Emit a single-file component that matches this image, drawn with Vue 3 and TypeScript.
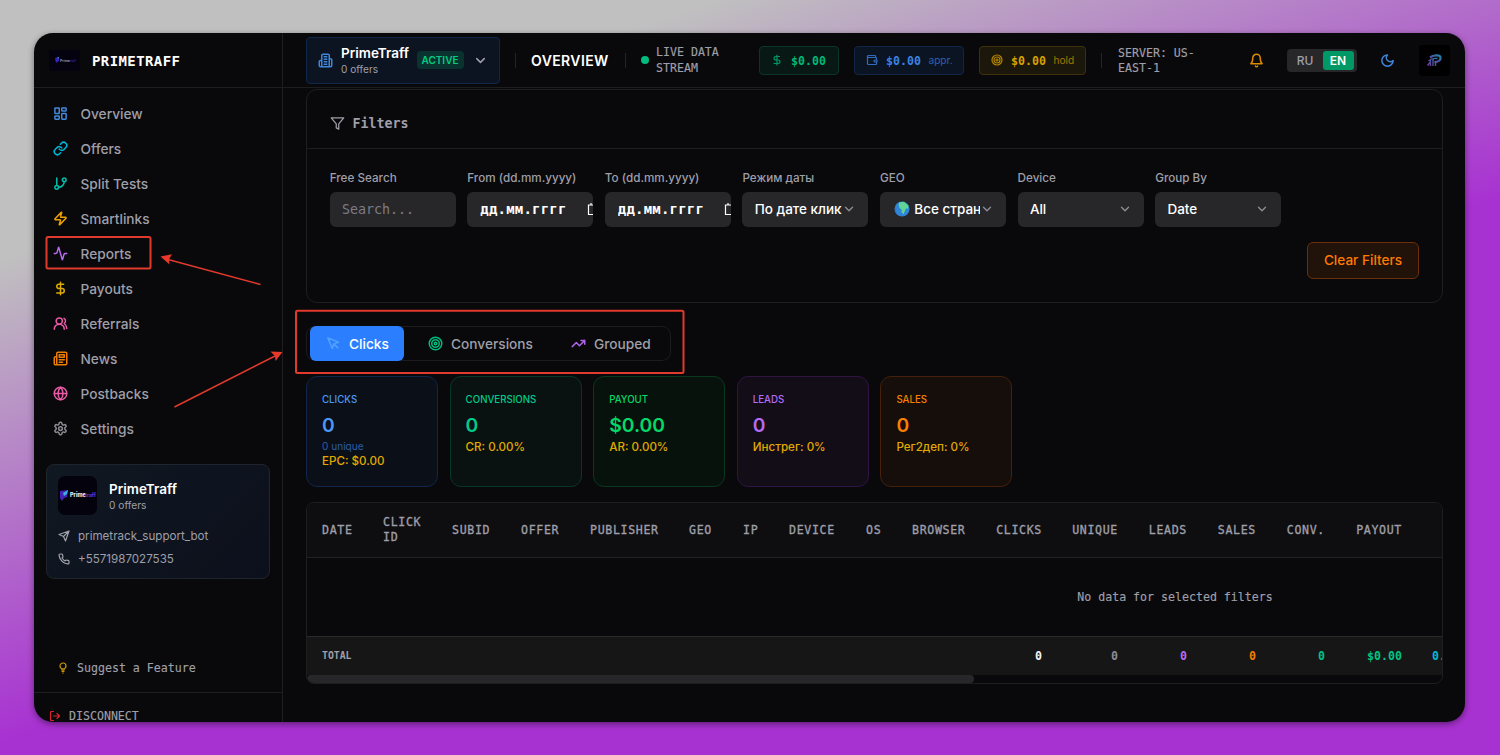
<template>
  <div class="backdrop">
    <div class="window">
      <!-- Sidebar -->
      <aside class="sidebar">
        <div class="brand">
          <svg class="brand-logo" viewBox="0 0 31 21">
            <rect width="31" height="21" rx="1" fill="#05020f" />
            <path d="M6 8l4-1v4l-3 2z" fill="#3d20b8" />
            <path d="M8 7.500l2-.5v2z" fill="#2f8bc4" />
            <text x="11" y="11.500" font-size="3.500" font-weight="700" fill="#8d8a9c">Prime</text>
            <text x="20.500" y="11.500" font-size="3" font-weight="700" fill="#37208a">traff</text>
          </svg>
          <span class="brand-name">PRIMETRAFF</span>
        </div>

        <nav class="nav">
          <a v-for="item in navItems" :key="item.label" class="nav-item">
            <svg
              class="icon nav-icon"
              :class="item.tone"
              viewBox="0 0 24 24"
              v-html="icons[item.icon]"
            ></svg>
            <span class="nav-label">{{ item.label }}</span>
          </a>
        </nav>

        <div class="company">
          <div class="company-head">
            <svg class="company-logo" viewBox="0 0 39 39">
              <rect width="39" height="39" rx="7" fill="#04020d" />
              <path d="M2 15l8-1-1 7-3 1-2 3-2-3z" fill="#4422b5" />
              <path d="M5 17l5-3-1 4-3 2z" fill="#38b2e0" />
              <text x="12" y="21" font-size="5.500" font-weight="800" fill="#e9e9f4">Prime</text>
              <text x="27" y="21" font-size="5" font-weight="800" fill="#5b34c9">traff</text>
            </svg>
            <div>
              <div class="company-name">PrimeTraff</div>
              <div class="company-sub">0 offers</div>
            </div>
          </div>
          <div class="contact">
            <svg class="icon contact-icon" viewBox="0 0 24 24" v-html="icons.send"></svg>
            <span>primetrack_support_bot</span>
          </div>
          <div class="contact">
            <svg class="icon contact-icon" viewBox="0 0 24 24" v-html="icons.phone"></svg>
            <span>+5571987027535</span>
          </div>
        </div>

        <div class="suggest">
          <svg class="icon suggest-icon" viewBox="0 0 24 24" v-html="icons.bulb"></svg>
          <span>Suggest a Feature</span>
        </div>
        <div class="disconnect">
          <svg class="icon disconnect-icon" viewBox="0 0 24 24" v-html="icons.logout"></svg>
          <span>DISCONNECT</span>
        </div>
      </aside>

      <!-- Main column -->
      <main class="main">
        <header class="topbar">
          <div class="account">
            <svg class="icon account-icon" viewBox="0 0 24 24" v-html="icons.building"></svg>
            <div class="account-text">
              <div class="account-name">PrimeTraff</div>
              <div class="account-sub">0 offers</div>
            </div>
            <span class="account-badge">ACTIVE</span>
            <svg class="icon account-chevron" viewBox="0 0 24 24" v-html="icons.chevron"></svg>
          </div>
          <i class="sep"></i>
          <h1 class="page-title">OVERVIEW</h1>
          <i class="sep"></i>
          <span class="live-dot"></span>
          <div class="live-text">LIVE DATA STREAM</div>

          <div class="chips">
            <div v-for="chip in chips" :key="chip.tone" class="chip" :class="'chip--' + chip.tone">
              <svg class="icon chip-icon" viewBox="0 0 24 24" v-html="icons[chip.icon]"></svg>
              <b>$0.00</b>
              <span v-if="chip.note" class="chip-note">{{ chip.note }}</span>
            </div>
          </div>
          <i class="sep"></i>
          <div class="server">SERVER: US-EAST-1</div>
          <svg class="icon bell" viewBox="0 0 24 24" v-html="icons.bell"></svg>
          <div class="lang">
            <span class="lang-item">RU</span>
            <span class="lang-item lang-item--on">EN</span>
          </div>
          <svg class="icon moon" viewBox="0 0 24 24" v-html="icons.moon"></svg>
          <svg class="avatar" viewBox="0 0 31 31">
            <defs>
              <linearGradient id="avatar-fill" x1="0" y1="1" x2="1" y2="0">
                <stop offset="0" stop-color="#8a3aa8" />
                <stop offset="0.500" stop-color="#4a52a0" />
                <stop offset="1" stop-color="#2088a8" />
              </linearGradient>
            </defs>
            <rect width="31" height="31" rx="3" fill="#000" />
            <g fill="none" stroke="url(#avatar-fill)">
              <path d="M11 12.500c3-2.500 10-3 10.500 0 .5 3-2.500 4.500-6 4.500" stroke-width="2.300" />
              <path d="M8.500 20.500l2.500-3M11.500 21v-6M14 21v-7M16.500 21v-5" stroke-width="1.400" />
              <path d="M9.500 16c2-2 5-3 9-2.500" stroke-width="1.400" />
            </g>
          </svg>
        </header>

        <div class="content">
          <section class="filters">
            <div class="filters-head">
              <svg class="icon filters-icon" viewBox="0 0 24 24" v-html="icons.filter"></svg>
              <span>Filters</span>
            </div>
            <div class="filters-body">
              <div v-for="field in fields" :key="field.label" class="field">
                <label class="field-label">{{ field.label }}</label>
                <div class="field-box" :class="'field-box--' + field.kind">
                  <svg v-if="field.globe" class="globe" viewBox="0 0 16 16">
                    <circle cx="8" cy="8" r="7.500" fill="#2f86d8" />
                    <path d="M2 4.500a7.500 7.500 0 0 0 2 9.800A9 9 0 0 1 2 4.500z" fill="#2460c4" />
                    <path
                      d="M5 1.500l5-.8 4.500 4-.5 3-2-.5-1 2.500-1.500 3.500-2-2 .3-2.500L5.500 7l-.8-2.500z"
                      fill="#5fd494"
                    />
                  </svg>
                  <span class="field-value">{{ field.value }}</span>
                  <svg v-if="field.kind === 'date'" class="calendar" viewBox="0 0 14 14">
                    <path
                      d="M1.500 3h11v9.500h-11zM4 1v2M10 1v2"
                      fill="none"
                      stroke="#fff"
                      stroke-width="1.200"
                    />
                  </svg>
                  <svg
                    v-if="field.kind === 'select'"
                    class="icon field-chevron"
                    viewBox="0 0 24 24"
                    v-html="icons.chevron"
                  ></svg>
                </div>
              </div>
            </div>
            <div class="filters-actions">
              <button class="clear-btn">Clear Filters</button>
            </div>
          </section>

          <div class="tabs">
            <div
              v-for="tab in tabs"
              :key="tab.label"
              class="tab"
              :class="['tab--' + tab.icon, { 'tab--active': tab.active }]"
            >
              <svg class="icon tab-icon" viewBox="0 0 24 24" v-html="icons[tab.icon]"></svg>
              <span>{{ tab.label }}</span>
            </div>
          </div>

          <div class="stats">
            <div v-for="stat in stats" :key="stat.label" class="stat" :class="'stat--' + stat.tone">
              <div class="stat-label">{{ stat.label }}</div>
              <div class="stat-value">{{ stat.value }}</div>
              <div v-if="stat.sub" class="stat-sub">{{ stat.sub }}</div>
              <div class="stat-note">{{ stat.note }}</div>
            </div>
          </div>

          <div class="report">
            <table class="report-table">
              <colgroup>
                <col v-for="(col, i) in columns" :key="i" :style="{ width: col.width + 'px' }" />
              </colgroup>
              <thead>
                <tr>
                  <th v-for="(col, i) in columns" :key="i" :class="{ num: col.total }">
                    {{ col.label }}
                  </th>
                </tr>
              </thead>
              <tbody>
                <tr>
                  <td class="empty" :colspan="columns.length">No data for selected filters</td>
                </tr>
              </tbody>
              <tfoot>
                <tr>
                  <td class="total" colspan="10">TOTAL</td>
                  <td
                    v-for="(col, i) in columns.slice(10)"
                    :key="i"
                    class="total"
                    :class="[col.tone, { num: col.label }]"
                  >
                    {{ col.total }}
                  </td>
                </tr>
              </tfoot>
            </table>
            <div class="scrollbar"><div class="scrollbar-thumb"></div></div>
          </div>
        </div>
      </main>
    </div>

    <!-- Callouts over the page -->
    <svg class="callouts" viewBox="0 0 1500 755">
      <g fill="none" stroke="#e03a2c" stroke-width="2">
        <rect x="46.500" y="237" width="104" height="31.500" rx="1.500" />
        <rect x="296" y="310.700" width="387.500" height="62.300" rx="1.500" />
        <path d="M260.500 284.500L168 259.500M174.500 407L275 356" stroke-width="1.500" />
      </g>
      <g fill="#e8392b">
        <path d="M160.500 256.500L172 254.200L169 259.300L169.500 264.500Z" />
        <path d="M282.500 352L275.500 361L275 356L270.500 351.500Z" />
      </g>
    </svg>
  </div>
</template>

<script setup lang="ts">
interface Field {
  label: string
  value: string
  kind: 'search' | 'date' | 'select'
  globe?: boolean
}

interface Column {
  label: string
  width: number
  total?: string
  tone?: string
}

// Shapes on a 24x24 grid
const icons: Record<string, string> = {
  dashboard:
    '<rect x="3" y="3" width="7" height="9" rx="1"/><rect x="14" y="3" width="7" height="5" rx="1"/><rect x="14" y="12" width="7" height="9" rx="1"/><rect x="3" y="16" width="7" height="5" rx="1"/>',
  link: '<path d="M10 13a5 5 0 0 0 7.540.540l3-3a5 5 0 0 0-7.070-7.070l-1.720 1.710"/><path d="M14 11a5 5 0 0 0-7.540-.540l-3 3a5 5 0 0 0 7.070 7.070l1.710-1.710"/>',
  branch:
    '<path d="M6 3v12M18 9a9 9 0 0 1-9 9"/><circle cx="18" cy="6" r="3"/><circle cx="6" cy="18" r="3"/>',
  zap: '<path d="M4 14a1 1 0 0 1-.78-1.630l9.900-10.200a.5.5 0 0 1 .86.46l-1.920 6.020A1 1 0 0 0 13 10h7a1 1 0 0 1 .78 1.630l-9.900 10.200a.5.5 0 0 1-.86-.46l1.920-6.020A1 1 0 0 0 11 14z"/>',
  activity:
    '<path d="M22 12h-2.480a2 2 0 0 0-1.930 1.460l-2.350 8.360a.25.25 0 0 1-.48 0L9.240 2.180a.25.25 0 0 0-.48 0l-2.350 8.360A2 2 0 0 1 4.490 12H2"/>',
  dollar: '<path d="M12 2v20M17 5H9.500a3.500 3.500 0 0 0 0 7h5a3.500 3.500 0 0 1 0 7H6"/>',
  users:
    '<path d="M18 21a8 8 0 0 0-16 0"/><circle cx="10" cy="8" r="5"/><path d="M22 20c0-3.370-2-6.500-4-8a5 5 0 0 0-.45-8.300"/>',
  news: '<path d="M4 22h16a2 2 0 0 0 2-2V4a2 2 0 0 0-2-2H8a2 2 0 0 0-2 2v16a2 2 0 0 1-2 2Zm0 0a2 2 0 0 1-2-2v-9c0-1.100.9-2 2-2h2"/><path d="M18 14h-8M15 18h-5M10 6h8v4h-8V6Z"/>',
  globe:
    '<circle cx="12" cy="12" r="10"/><path d="M12 2a14.500 14.500 0 0 0 0 20 14.500 14.500 0 0 0 0-20M2 12h20"/>',
  settings:
    '<path d="M12.220 2h-.44a2 2 0 0 0-2 2v.18a2 2 0 0 1-1 1.730l-.43.25a2 2 0 0 1-2 0l-.15-.08a2 2 0 0 0-2.730.73l-.22.38a2 2 0 0 0 .73 2.730l.15.1a2 2 0 0 1 1 1.720v.51a2 2 0 0 1-1 1.740l-.15.09a2 2 0 0 0-.73 2.730l.22.38a2 2 0 0 0 2.730.73l.15-.08a2 2 0 0 1 2 0l.43.25a2 2 0 0 1 1 1.730V20a2 2 0 0 0 2 2h.44a2 2 0 0 0 2-2v-.18a2 2 0 0 1 1-1.730l.43-.25a2 2 0 0 1 2 0l.15.08a2 2 0 0 0 2.730-.73l.22-.39a2 2 0 0 0-.73-2.730l-.15-.08a2 2 0 0 1-1-1.740v-.5a2 2 0 0 1 1-1.740l.15-.09a2 2 0 0 0 .73-2.730l-.22-.38a2 2 0 0 0-2.730-.73l-.15.08a2 2 0 0 1-2 0l-.43-.25a2 2 0 0 1-1-1.730V4a2 2 0 0 0-2-2z"/><circle cx="12" cy="12" r="3"/>',
  send: '<path d="M22 2L15 22l-4-9-9-4ZM22 2L11 13"/>',
  phone:
    '<path d="M22 16.920v3a2 2 0 0 1-2.180 2 19.790 19.790 0 0 1-8.630-3.070 19.500 19.500 0 0 1-6-6 19.790 19.790 0 0 1-3.070-8.670A2 2 0 0 1 4.110 2h3a2 2 0 0 1 2 1.720 12.840 12.840 0 0 0 .7 2.810 2 2 0 0 1-.45 2.110L8.090 9.910a16 16 0 0 0 6 6l1.270-1.270a2 2 0 0 1 2.110-.45 12.840 12.840 0 0 0 2.810.7A2 2 0 0 1 22 16.920z"/>',
  bulb: '<circle cx="12" cy="8" r="6"/><path d="M10 14.500v2h4v-2M10 19h4M11.500 22h1"/>',
  logout: '<path d="M9 21H5a2 2 0 0 1-2-2V5a2 2 0 0 1 2-2h4M16 17l5-5-5-5M21 12H9"/>',
  building:
    '<path d="M6 22V4a2 2 0 0 1 2-2h8a2 2 0 0 1 2 2v18ZM6 12H4a2 2 0 0 0-2 2v6a2 2 0 0 0 2 2h2M18 9h2a2 2 0 0 1 2 2v9a2 2 0 0 1-2 2h-2M10 6h4M10 10h4M10 14h4M10 18h4"/>',
  chevron: '<path d="M6 9l6 6 6-6"/>',
  wallet:
    '<path d="M19 7V4a1 1 0 0 0-1-1H5a2 2 0 0 0 0 4h15a1 1 0 0 1 1 1v4h-3a2 2 0 0 0 0 4h3a1 1 0 0 0 1-1v-2a1 1 0 0 0-1-1"/><path d="M3 5v14a2 2 0 0 0 2 2h15a1 1 0 0 0 1-1v-4"/>',
  target:
    '<circle cx="12" cy="12" r="10"/><circle cx="12" cy="12" r="6"/><circle cx="12" cy="12" r="2"/>',
  bell: '<path d="M6 8a6 6 0 0 1 12 0c0 7 3 9 3 9H3s3-2 3-9M10.300 21a1.940 1.940 0 0 0 3.400 0"/>',
  moon: '<path d="M12 3a6 6 0 0 0 9 9 9 9 0 1 1-9-9Z"/>',
  filter: '<path d="M22 3H2l8 9.460V19l4 2v-8.540z"/>',
  pointer: '<path d="M3 3l7.070 16.970 2.510-7.390 7.390-2.510zM13 13l6 6"/>',
  trend: '<path d="M22 7l-8.500 8.500-5-5L2 17M16 7h6v6"/>',
}

const navItems = [
  { label: 'Overview', icon: 'dashboard', tone: 'blue' },
  { label: 'Offers', icon: 'link', tone: 'cyan' },
  { label: 'Split Tests', icon: 'branch', tone: 'teal' },
  { label: 'Smartlinks', icon: 'zap', tone: 'amber' },
  { label: 'Reports', icon: 'activity', tone: 'purple' },
  { label: 'Payouts', icon: 'dollar', tone: 'yellow' },
  { label: 'Referrals', icon: 'users', tone: 'pink' },
  { label: 'News', icon: 'news', tone: 'orange' },
  { label: 'Postbacks', icon: 'globe', tone: 'pink' },
  { label: 'Settings', icon: 'settings', tone: 'grey' },
]

const chips = [
  { tone: 'green', icon: 'dollar', note: '' },
  { tone: 'blue', icon: 'wallet', note: 'appr.' },
  { tone: 'yellow', icon: 'target', note: 'hold' },
]

const fields: Field[] = [
  { label: 'Free Search', value: 'Search...', kind: 'search' },
  { label: 'From (dd.mm.yyyy)', value: 'дд.мм.гггг', kind: 'date' },
  { label: 'To (dd.mm.yyyy)', value: 'дд.мм.гггг', kind: 'date' },
  { label: 'Режим даты', value: 'По дате клика', kind: 'select' },
  { label: 'GEO', value: 'Все страны', kind: 'select', globe: true },
  { label: 'Device', value: 'All', kind: 'select' },
  { label: 'Group By', value: 'Date', kind: 'select' },
]

const tabs = [
  { label: 'Clicks', icon: 'pointer', active: true },
  { label: 'Conversions', icon: 'target', active: false },
  { label: 'Grouped', icon: 'trend', active: false },
]

const stats = [
  { label: 'CLICKS', value: '0', sub: '0 unique', note: 'EPC: $0.00', tone: 'blue' },
  { label: 'CONVERSIONS', value: '0', note: 'CR: 0.00%', tone: 'emerald' },
  { label: 'PAYOUT', value: '$0.00', note: 'AR: 0.00%', tone: 'green' },
  { label: 'LEADS', value: '0', note: 'Инстрег: 0%', tone: 'purple' },
  { label: 'SALES', value: '0', note: 'Рег2деп: 0%', tone: 'orange' },
]

const columns: Column[] = [
  { label: 'DATE', width: 61 },
  { label: 'CLICK ID', width: 69 },
  { label: 'SUBID', width: 69 },
  { label: 'OFFER', width: 69 },
  { label: 'PUBLISHER', width: 99 },
  { label: 'GEO', width: 54 },
  { label: 'IP', width: 46 },
  { label: 'DEVICE', width: 77 },
  { label: 'OS', width: 46 },
  { label: 'BROWSER', width: 84 },
  { label: 'CLICKS', width: 76, total: '0', tone: 'white' },
  { label: 'UNIQUE', width: 76, total: '0', tone: 'grey' },
  { label: 'LEADS', width: 69, total: '0', tone: 'purple' },
  { label: 'SALES', width: 69, total: '0', tone: 'orange' },
  { label: 'CONV.', width: 69, total: '0', tone: 'emerald' },
  { label: 'PAYOUT', width: 77, total: '$0.00', tone: 'emerald' },
  { label: '', width: 626, total: '0.00%', tone: 'cyan' },
]
</script>

<style>
body {
  margin: 0;
  overflow: hidden;
}
</style>

<style scoped>
.backdrop {
  position: relative;
  box-sizing: border-box;
  width: 1500px;
  height: 755px;
  padding: 33px 35px 33px 34px;
  background: linear-gradient(160deg, #c0c0c0 20%, #a832d1 57%);
  font-family: Inter, 'Liberation Sans', sans-serif;
  color: #9f9fa9;
}
.backdrop *,
.backdrop *::before {
  box-sizing: border-box;
}
.window {
  display: flex;
  height: 689px;
  overflow: hidden;
  background: #09090b;
  border-radius: 19px;
  box-shadow: 0 2px 6px rgba(0, 0, 0, 0.45);
}
.icon {
  flex: none;
  fill: none;
  stroke: currentColor;
  stroke-width: 2.400;
  stroke-linecap: round;
  stroke-linejoin: round;
}

/* tones */
.blue { color: #4189dc; }
.cyan { color: #00b8db; }
.teal { color: #00bba7; }
.amber { color: #eba000; }
.purple { color: #b66bf0; }
.yellow { color: #dcac00; }
.pink { color: #e95aa6; }
.orange { color: #ee7d00; }
.emerald { color: #00c384; }
.white { color: #f4f4f5; }
.grey { color: #8c8c95; }

/* === Sidebar === */
.sidebar {
  display: flex;
  flex: none;
  flex-direction: column;
  width: 249px;
  border-right: 1px solid #1e1e21;
}
.brand {
  display: flex;
  flex: none;
  align-items: center;
  height: 55px;
  padding: 1px 0 0 15px;
  border-bottom: 1px solid #1e1e21;
}
.brand-logo {
  width: 31px;
  height: 21px;
  margin-right: 12px;
}
.brand-name {
  font-family: 'DejaVu Sans Mono', 'Liberation Mono', monospace;
  font-size: 14px;
  font-weight: 700;
  letter-spacing: 0.4px;
  color: #fff;
}
.nav {
  display: flex;
  flex-direction: column;
  padding: 8.500px 12px 0 11.500px;
}
.nav-item {
  display: flex;
  align-items: center;
  height: 34.95px;
  padding-left: 7.500px;
  font-size: 13.700px;
  font-weight: 500;
}
.nav-label {
  padding-top: 1px;
}
.nav-icon {
  width: 15px;
  height: 15px;
  margin-right: 12.500px;
}
.company {
  flex: none;
  height: 115px;
  margin: 18.500px 12px 0;
  padding: 11px;
  border: 1px solid #20242c;
  border-radius: 8px;
  background: linear-gradient(135deg, #101822, #0c101c);
}
.company-head {
  display: flex;
  align-items: center;
  gap: 12px;
  margin-bottom: 8.500px;
}
.company-logo {
  width: 39px;
  height: 39px;
}
.company-name {
  font-size: 13.500px;
  font-weight: 600;
  line-height: 18px;
  color: #fff;
}
.company-sub {
  font-size: 10.200px;
  line-height: 14px;
}
.contact {
  display: flex;
  align-items: center;
  height: 23.300px;
  font-size: 11.600px;
}
.contact-icon {
  width: 12px;
  height: 12px;
  margin-right: 8px;
}
.suggest,
.disconnect {
  display: flex;
  flex: none;
  align-items: center;
  font-family: 'DejaVu Sans Mono', 'Liberation Mono', monospace;
  font-size: 11.600px;
  -webkit-text-stroke: 0.15px currentColor;
}
.suggest {
  height: 48px;
  margin-top: auto;
  padding-left: 23px;
}
.suggest-icon {
  width: 12px;
  height: 12px;
  margin-right: 8px;
  color: #c89600;
}
.disconnect {
  height: 30px;
  padding: 16px 0 0 15px;
  border-top: 1px solid #1e1e21;
}
.disconnect-icon {
  width: 12px;
  height: 12px;
  margin-right: 8px;
  color: #d8222c;
}

/* === Top bar === */
.main {
  flex: 1;
  min-width: 0;
}
.topbar {
  display: flex;
  align-items: center;
  height: 55px;
  padding-left: 22.500px;
  border-bottom: 1px solid #1e1e21;
}
.topbar > * {
  flex: none;
}
.account {
  display: flex;
  align-items: center;
  width: 194.500px;
  height: 47px;
  padding-left: 11.500px;
  border: 1px solid #10264a;
  border-radius: 4px;
  background: #0c1422;
}
.account-icon {
  width: 15px;
  height: 15px;
  color: #3f86d8;
}
.account-text {
  width: 75.500px;
  margin-left: 8px;
}
.account-name {
  font-size: 13.500px;
  font-weight: 600;
  line-height: 18px;
  color: #fff;
}
.account-sub {
  padding-top: 1px;
  font-size: 10.100px;
  line-height: 13px;
}
.account-badge {
  width: 47px;
  height: 18px;
  border-radius: 4px;
  background: #0a3330;
  font-size: 10px;
  font-weight: 600;
  line-height: 18px;
  text-align: center;
  color: #00cf83;
}
.account-chevron {
  width: 15px;
  height: 15px;
  margin-left: 9px;
}
.sep {
  width: 1px;
  height: 15px;
  margin-left: 15px;
  background: #242427;
}
.page-title {
  width: 79px;
  margin: 0 0 0 15px;
  padding-top: 1px;
  font-size: 14px;
  font-weight: 600;
  letter-spacing: 0.4px;
  color: #fff;
}
.live-dot {
  width: 8px;
  height: 8px;
  margin-left: 15px;
  border-radius: 50%;
  background: #00bc7d;
}
.live-text,
.server {
  width: 80px;
  margin-left: 7px;
  padding-top: 1px;
  font-family: 'DejaVu Sans Mono', 'Liberation Mono', monospace;
  font-size: 11.600px;
  line-height: 15.500px;
  -webkit-text-stroke: 0.15px currentColor;
}
.chips {
  display: flex;
  gap: 15px;
  margin-left: 23px;
}
.chip {
  display: flex;
  align-items: center;
  width: 80px;
  height: 29px;
  padding-left: 11px;
  border: 1px solid;
  border-radius: 4px;
  font-family: 'DejaVu Sans Mono', 'Liberation Mono', monospace;
  font-size: 11.600px;
}
.chip b {
  margin-left: 8px;
  padding-top: 1px;
}
.chip-icon {
  width: 12px;
  height: 12px;
  opacity: 0.8;
}
.chip-note {
  margin-left: 7.500px;
  font-family: Inter, sans-serif;
  font-size: 10.200px;
  opacity: 0.7;
}
.chip--green {
  border-color: #0a3626;
  background: #081814;
  color: #00b878;
}
.chip--blue {
  width: 110px;
  border-color: #11274a;
  background: #0b1422;
  color: #3b82e0;
}
.chip--yellow {
  width: 107px;
  border-color: #40300a;
  background: #1c170b;
  color: #d9a000;
}
.server {
  margin-left: 16px;
  padding-top: 2px;
  width: 90px;
}
.bell {
  width: 15px;
  height: 15px;
  margin-left: 41px;
  color: #dc8a00;
}
.lang {
  display: flex;
  width: 70px;
  height: 23px;
  margin-left: 22.500px;
  padding: 2px 2px 2px 3px;
  border-radius: 4px;
  background: #27272a;
  font-size: 12px;
  font-weight: 500;
  line-height: 20px;
}
.lang-item {
  width: 33px;
  padding-right: 2px;
  text-align: center;
}
.lang-item--on {
  width: 31px;
  padding: 0;
  border-radius: 3px;
  background: #009966;
  font-weight: 600;
  color: #fff;
}
.moon {
  width: 15px;
  height: 15px;
  margin-left: 23px;
  color: #3f86d8;
}
.avatar {
  width: 31px;
  height: 31px;
  margin-left: 24px;
}

/* === Filters === */
.content {
  padding: 1px 22px 0 23px;
}
.filters {
  height: 213.500px;
  border: 1px solid #1e1e21;
  border-radius: 11px;
}
.filters-head {
  display: flex;
  align-items: center;
  height: 59px;
  padding: 8px 0 0 23px;
  border-bottom: 1px solid #1e1e21;
  font-family: 'DejaVu Sans Mono', 'Liberation Mono', monospace;
  font-size: 13.300px;
  font-weight: 700;
}
.filters-icon {
  width: 15px;
  height: 15px;
  margin-right: 7.500px;
  stroke-width: 2;
}
.filters-body {
  display: flex;
  gap: 11.580px;
  padding: 20px 23px 0 22.700px;
}
.field {
  width: 126px;
}
.field-label {
  display: block;
  height: 23px;
  font-size: 11.700px;
  font-weight: 500;
  line-height: 18px;
  white-space: nowrap;
}
.field-box {
  display: flex;
  align-items: center;
  height: 35px;
  padding: 0 12px 1px 12.300px;
  overflow: hidden;
  border-radius: 6px;
  background: #27272a;
  font-size: 13.500px;
  font-weight: 500;
  white-space: nowrap;
  color: #fff;
}
.field-value {
  overflow: hidden;
}
.field-box--search,
.field-box--date {
  font-family: 'DejaVu Sans Mono', 'Liberation Mono', monospace;
}
.field-box--search {
  font-size: 13.300px;
  font-weight: 400;
  color: #7c7c86;
}
.field-box--date {
  padding-left: 13px;
  font-weight: 700;
}
.field-box--date .field-value {
  flex: none;
  font-size: 14px;
  letter-spacing: 0.2px;
}
.calendar {
  flex: none;
  width: 14px;
  height: 14px;
  margin-left: 20px;
}
.field-box--select {
  padding-right: 12px;
}
.globe {
  flex: none;
  width: 16px;
  height: 16px;
  margin: 0 4.500px 0 1.500px;
}
.field-chevron {
  width: 14px;
  height: 14px;
  margin-left: auto;
  color: #8c8c95;
}
.filters-actions {
  display: flex;
  justify-content: flex-end;
  padding: 15px 23px 0 0;
}
.clear-btn {
  width: 112px;
  height: 37px;
  padding: 0 0 1px;
  border: 1px solid #6a2f08;
  border-radius: 6px;
  background: #21120a;
  font-family: inherit;
  font-size: 13.600px;
  font-weight: 500;
  color: #ff7b00;
}

/* === Tabs === */
.tabs {
  display: flex;
  width: 365px;
  height: 35px;
  margin-top: 23.500px;
  padding-left: 4px;
  border-radius: 9px;
  box-shadow: inset 0 0 0 1px #1c1c1f;
}
.tab {
  display: flex;
  align-items: center;
  padding-left: 16px;
  font-size: 13.700px;
  font-weight: 500;
}
.tab-icon {
  width: 15px;
  height: 15px;
  margin-right: 8px;
}
.tab--active {
  width: 94px;
  border-radius: 6px;
  background: #2b7fff;
  color: #fff;
}
.tab--active .tab-icon { color: #51a2ff; }
.tab--target {
  width: 144px;
  padding-left: 24px;
}
.tab--target .tab-icon { color: #00bc7d; }
.tab--trend { padding-left: 23px; }
.tab--trend .tab-icon { color: #ad63e8; }

/* === Stat cards === */
.stats {
  display: flex;
  gap: 11.600px;
  margin-top: 15.400px;
}
.stat {
  width: 132px;
  height: 110.500px;
  padding: 15px 15px 0;
  border: 1px solid;
  border-radius: 11px;
}
.stat-label {
  font-size: 9.700px;
  font-weight: 500;
  line-height: 15px;
}
.stat-value {
  margin-top: 4.500px;
  font-size: 19.300px;
  font-weight: 600;
  line-height: 27px;
}
.stat-sub {
  font-size: 10.100px;
  line-height: 14px;
  color: #2b5da6;
}
.stat-note {
  font-size: 11.600px;
  font-weight: 500;
  line-height: 17.500px;
  color: #e0aa00;
}
.stat--blue { border-color: #10264a; background: #0b0f18; color: #4a98f5; }
.stat--emerald { border-color: #08352a; background: #091211; color: #00ca8b; }
.stat--green { border-color: #08381e; background: #08120d; color: #04d968; }
.stat--purple { border-color: #301444; background: #120d17; color: #b66bf5; }
.stat--orange { border-color: #45200a; background: #150e0a; color: #f98000; }

/* === Report table === */
.report {
  height: 182px;
  margin-top: 15.100px;
  overflow: hidden;
  border: 1px solid #1e1e21;
  border-radius: 8px;
}
.report-table {
  width: 1736px;
  table-layout: fixed;
  border-collapse: separate;
  border-spacing: 0;
  font-family: 'DejaVu Sans Mono', 'Liberation Mono', monospace;
  font-size: 11.600px;
}
.report-table th {
  height: 55px;
  padding: 1px 15px 0;
  border-bottom: 1px solid #222225;
  background: #0e0e10;
  font-size: 11.600px;
  font-weight: 500;
  line-height: 15.500px;
  letter-spacing: 0.65px;
  text-align: left;
  -webkit-text-stroke: 0.3px currentColor;
}
.report-table th.num,
.report-table td.num {
  text-align: right;
}
.report-table .empty {
  height: 78px;
  padding: 0;
  text-align: center;
  -webkit-text-stroke: 0.15px currentColor;
}
.report-table .total {
  height: 39px;
  padding: 0 15px;
  border-top: 1px solid #2a2a2d;
  background: #161617;
  font-weight: 700;
}
.report-table .total:first-child {
  font-size: 9.800px;
}
.scrollbar {
  height: 8px;
}
.scrollbar-thumb {
  width: 667px;
  height: 8px;
  border-radius: 4px;
  background: #27272a;
}

/* === Callouts === */
.callouts {
  position: absolute;
  inset: 0;
  width: 1500px;
  height: 755px;
  pointer-events: none;
}
</style>
